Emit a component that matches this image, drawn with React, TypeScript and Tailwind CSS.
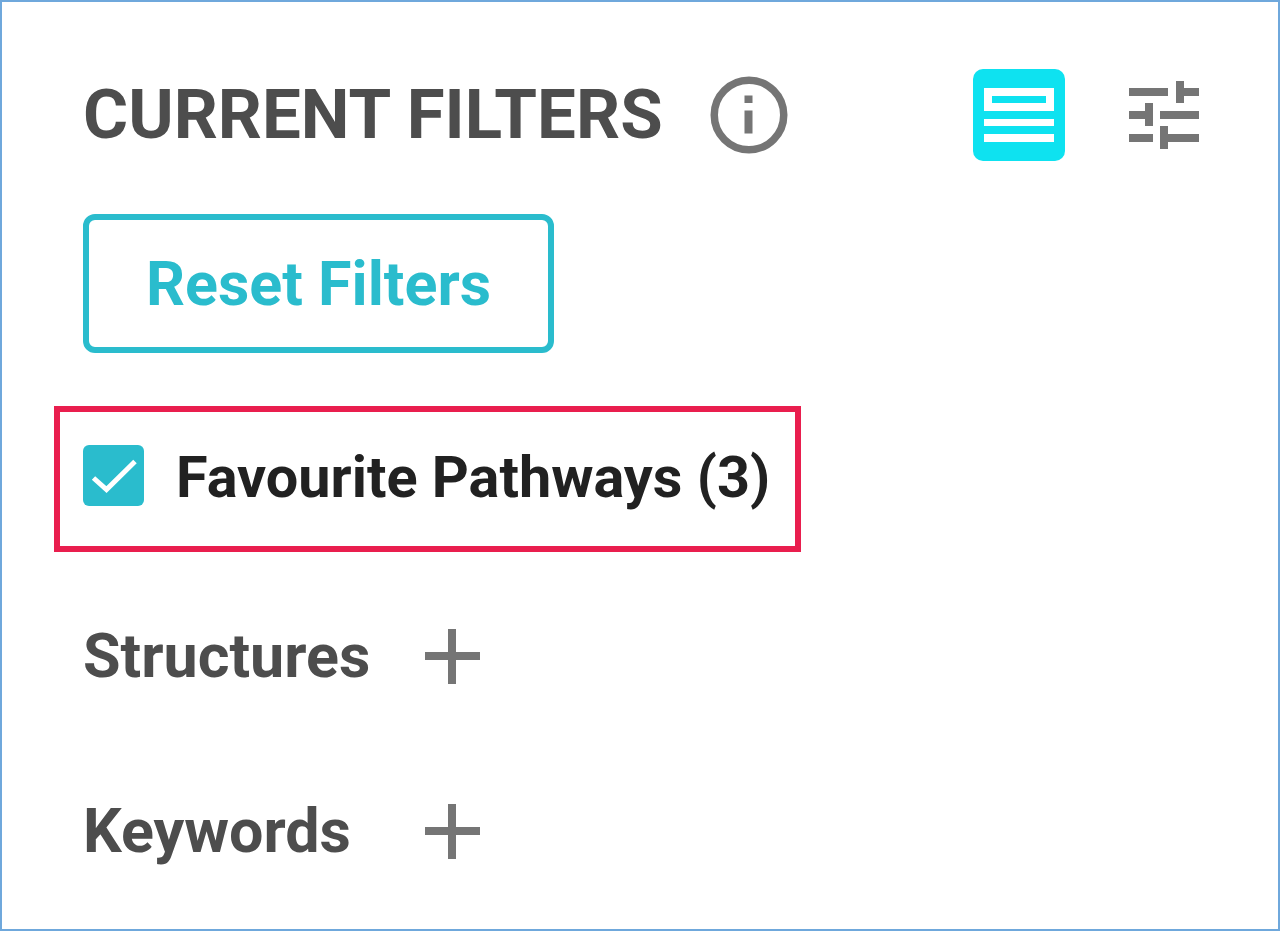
export default function App() {
  return (
    <div className="w-[1280px] h-[931px] bg-white border-2 border-[#6fa8dc] font-['Roboto',sans-serif] overflow-hidden">
      <div className="pl-[81px] pr-[79px] pt-[67px] flex items-center justify-between h-[159px]">
        <div className="flex items-center gap-[47px]">
          <h1 className="text-[69px] leading-[92px] font-bold text-[#4d4d4d] whitespace-nowrap">CURRENT FILTERS</h1>
          <svg width="78" height="78" viewBox="0 0 78 78" className="text-[#757575]">
            <circle cx="39" cy="39" r="34.75" fill="none" stroke="currentColor" strokeWidth="7.5" />
            <rect x="34.5" y="19.5" width="8" height="7.5" fill="currentColor" />
            <rect x="34.5" y="34.5" width="8" height="23" fill="currentColor" />
          </svg>
        </div>
        <div className="flex items-center gap-[64px]">
          <button className="w-[92px] h-[92px] rounded-[10px] bg-[#0ee2f0] flex items-center justify-center">
            <svg width="70" height="54" viewBox="0 0 70 54">
              <path fill="#fff" fillRule="evenodd" d="M0 0h70v23H0zM8 8v7h54V8z" />
              <rect y="31" width="70" height="7" fill="#fff" />
              <rect y="46" width="70" height="8" fill="#fff" />
            </svg>
          </button>
          <svg width="70" height="68" viewBox="0 0 70 68" fill="#757575">
            <rect x="0" y="7" width="39" height="8" />
            <rect x="54" y="7" width="16" height="8" />
            <rect x="47" y="0" width="8" height="22" />
            <rect x="0" y="30" width="16" height="8" />
            <rect x="16" y="22" width="8" height="23" />
            <rect x="31" y="30" width="39" height="8" />
            <rect x="0" y="53" width="24" height="8" />
            <rect x="31" y="45" width="8" height="23" />
            <rect x="39" y="53" width="31" height="8" />
          </svg>
        </div>
      </div>

      <div className="pl-[81px] mt-[53px]">
        <button className="w-[471px] h-[139px] border-[6px] border-[#2abccd] rounded-[12px] text-[61px] font-bold text-[#2abccd] flex items-center justify-center pt-[2px]">
          Reset Filters
        </button>
      </div>

      <div className="ml-[52px] mt-[53px] w-[747px] h-[146px] border-[6px] border-[#e91e4e] flex items-center pl-[23px] gap-[32px]">
        <span className="w-[61px] h-[61px] rounded-[6px] bg-[#2abccd] flex items-center justify-center shrink-0 -mt-[7px]">
          <svg width="46" height="36" viewBox="0 0 46 36" fill="none">
            <path d="M2.5 20 L15.5 31.5 L44 3.5" stroke="#fff" strokeWidth="5" strokeLinejoin="miter" />
          </svg>
        </span>
        <span className="text-[57.6px] font-bold text-[#212121] whitespace-nowrap -mt-[1px]">Favourite Pathways (3)</span>
      </div>

      <div className="pl-[81px] mt-[71px] flex items-center gap-[55px] h-[66px]">
        <span className="text-[61px] font-bold text-[#4d4d4d] mt-[2px]">Structures</span>
        <Plus />
      </div>
      <div className="pl-[81px] mt-[109px] flex items-center gap-[74px] h-[66px]">
        <span className="text-[61px] font-bold text-[#4d4d4d] mt-[2px]">Keywords</span>
        <Plus />
      </div>
    </div>
  );
}

function Plus() {
  return (
    <svg width="55" height="55" viewBox="0 0 55 55" fill="#757575">
      <rect x="0" y="23" width="55" height="8" />
      <rect x="23" y="0" width="8" height="55" />
    </svg>
  );
}
